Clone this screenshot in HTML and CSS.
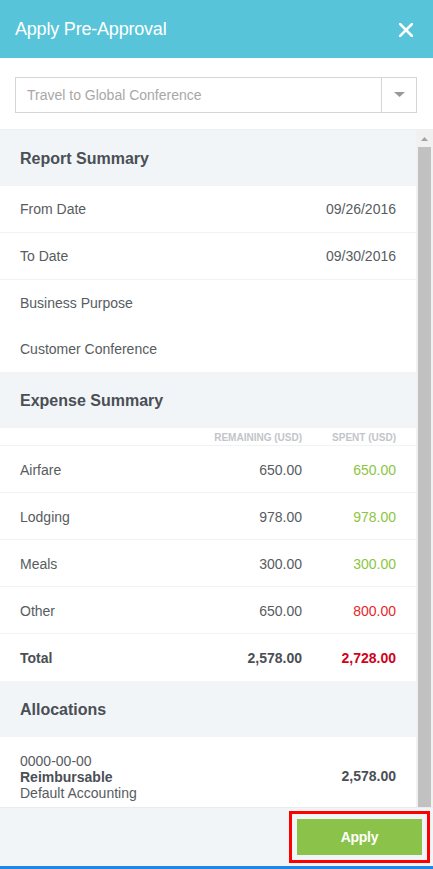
FILE: index.html
```html
<!DOCTYPE html>
<html>
<head>
<meta charset="utf-8">
<link rel="stylesheet" href="styles.css">
</head>
<body>
<div class="modal">
  <header class="topbar">
    <h1 class="title">Apply Pre-Approval</h1>
    <svg class="close" width="14" height="14" viewBox="0 0 14 14"><path d="M1 1L13 13M13 1L1 13" stroke="#fff" stroke-width="2.6" stroke-linecap="square"/></svg>
  </header>
  <div class="picker">
    <div class="select">
      <span class="select-text">Travel to Global Conference</span>
      <span class="select-btn"><svg width="11" height="6" viewBox="0 0 11 6"><path d="M0 0H11L5.5 5Z" fill="#999"/></svg></span>
    </div>
  </div>
  <div class="body">
    <div class="content">
      <div class="sec-head">Report Summary</div>
      <div class="row line"><span>From Date</span><span>09/26/2016</span></div>
      <div class="row line"><span>To Date</span><span>09/30/2016</span></div>
      <div class="row"><span>Business Purpose</span></div>
      <div class="row"><span>Customer Conference</span></div>

      <div class="sec-head">Expense Summary</div>
      <div class="grid colhead"><span></span><span>REMAINING (USD)</span><span>SPENT (USD)</span></div>
      <div class="grid erow"><span>Airfare</span><span>650.00</span><span class="green">650.00</span></div>
      <div class="grid erow"><span>Lodging</span><span>978.00</span><span class="green">978.00</span></div>
      <div class="grid erow"><span>Meals</span><span>300.00</span><span class="green">300.00</span></div>
      <div class="grid erow"><span>Other</span><span>650.00</span><span class="red">800.00</span></div>
      <div class="grid erow total"><span>Total</span><span>2,578.00</span><span class="dred">2,728.00</span></div>

      <div class="sec-head">Allocations</div>
      <div class="alloc">
        <div class="alloc-info">
          <span>0000-00-00</span>
          <span class="bold">Reimbursable</span>
          <span>Default Accounting</span>
        </div>
        <span class="bold">2,578.00</span>
      </div>
    </div>
    <div class="scrollbar">
      <div class="sb-arrow"><svg width="7" height="4" viewBox="0 0 7 4"><path d="M0 4H7L3.5 0Z" fill="#a3a3a3"/></svg></div>
      <div class="sb-thumb"></div>
    </div>
  </div>
  <footer class="footer">
    <button class="apply">Apply</button>
  </footer>
</div>
</body>
</html>
```
FILE: styles.css
```css
* { box-sizing: border-box; }
html, body { margin: 0; padding: 0; }
body {
  font-family: "Liberation Sans", Arial, sans-serif;
  background: #fff;
  color: #575c61;
}
.modal {
  width: 433px;
  height: 869px;
  display: flex;
  flex-direction: column;
  border-bottom: 3px solid #1e88e5;
}
.topbar {
  height: 58px;
  flex: none;
  background: #58c4d9;
  display: flex;
  align-items: center;
  justify-content: space-between;
  padding: 0 20px 0 15px;
}
.title {
  margin: 0;
  font-size: 18px;
  font-weight: normal;
  color: #fff;
  letter-spacing: -0.2px;
}
.close { display: block; margin-top: 2px; }
.picker {
  flex: none;
  height: 72px;
  padding: 19px 16px 0 15px;
  border-bottom: 1px solid #eef0f2;
}
.select {
  height: 36px;
  border: 1px solid #d5d5d5;
  display: flex;
  align-items: center;
}
.select-text {
  flex: 1;
  padding-left: 11px;
  font-size: 14px;
  color: #a8a8a8;
}
.select-btn {
  width: 35px;
  height: 100%;
  border-left: 1px solid #d5d5d5;
  display: flex;
  align-items: center;
  justify-content: center;
}
.select-btn svg { display: block; }
.body {
  flex: 1;
  display: flex;
  min-height: 0;
  border-bottom: 1px solid #e8ecef;
}
.content {
  width: 416px;
  flex: none;
  overflow: hidden;
}
.sec-head {
  height: 56px;
  background: #f1f5f8;
  display: flex;
  align-items: center;
  padding-left: 20px;
  padding-top: 1px;
  font-size: 16px;
  font-weight: bold;
  color: #4a4f55;
}
.row {
  height: 46px;
  display: flex;
  align-items: center;
  justify-content: space-between;
  padding: 0 20px;
  font-size: 14px;
}
.row.line { height: 47px; border-bottom: 1px solid #f0f2f4; }
.grid {
  display: grid;
  grid-template-columns: 1fr 110px 94px;
  padding: 0 20px;
  align-items: center;
}
.grid span:nth-child(2), .grid span:nth-child(3) { text-align: right; }
.colhead {
  height: 18px;
  border-bottom: 1px solid #f0f2f4;
  font-size: 10px;
  font-weight: bold;
  color: #c2c5c9;
  padding-top: 1px;
}
.erow {
  height: 47px;
  border-bottom: 1px solid #f0f2f4;
  font-size: 14px;
  padding-top: 2px;
}
.erow.total { border-bottom: none; font-weight: bold; color: #4a4f55; padding-top: 0; }
.green { color: #8cc63f; }
.red { color: #e8262a; }
.dred { color: #d0021b; }
.alloc {
  height: 70px;
  display: flex;
  align-items: center;
  justify-content: space-between;
  padding: 10px 20px 0;
  font-size: 14px;
}
.alloc > .bold { margin-top: -2px; }
.alloc-info {
  display: flex;
  flex-direction: column;
  line-height: 16px;
}
.bold { font-weight: bold; color: #4a4f55; }
.scrollbar {
  width: 17px;
  flex: none;
  background: #f1f1f1;
  display: flex;
  flex-direction: column;
}
.sb-arrow {
  height: 17px;
  display: flex;
  align-items: center;
  justify-content: center;
}
.sb-arrow svg { display: block; }
.sb-thumb {
  flex: 1;
  margin: 0 2px 0 2px;
  background: #c1c1c1;
}
.footer {
  flex: none;
  height: 58px;
  background: #f1f5f8;
  display: flex;
  align-items: center;
  justify-content: flex-end;
  padding-right: 11px;
}
.apply {
  width: 125px;
  height: 36px;
  border: none;
  background: #8bc34a;
  color: #fff;
  font-family: "Liberation Sans", Arial, sans-serif;
  font-size: 14px;
  font-weight: bold;
  outline: 3px solid #f00;
  outline-offset: 5px;
  letter-spacing: -0.3px;
}
```
